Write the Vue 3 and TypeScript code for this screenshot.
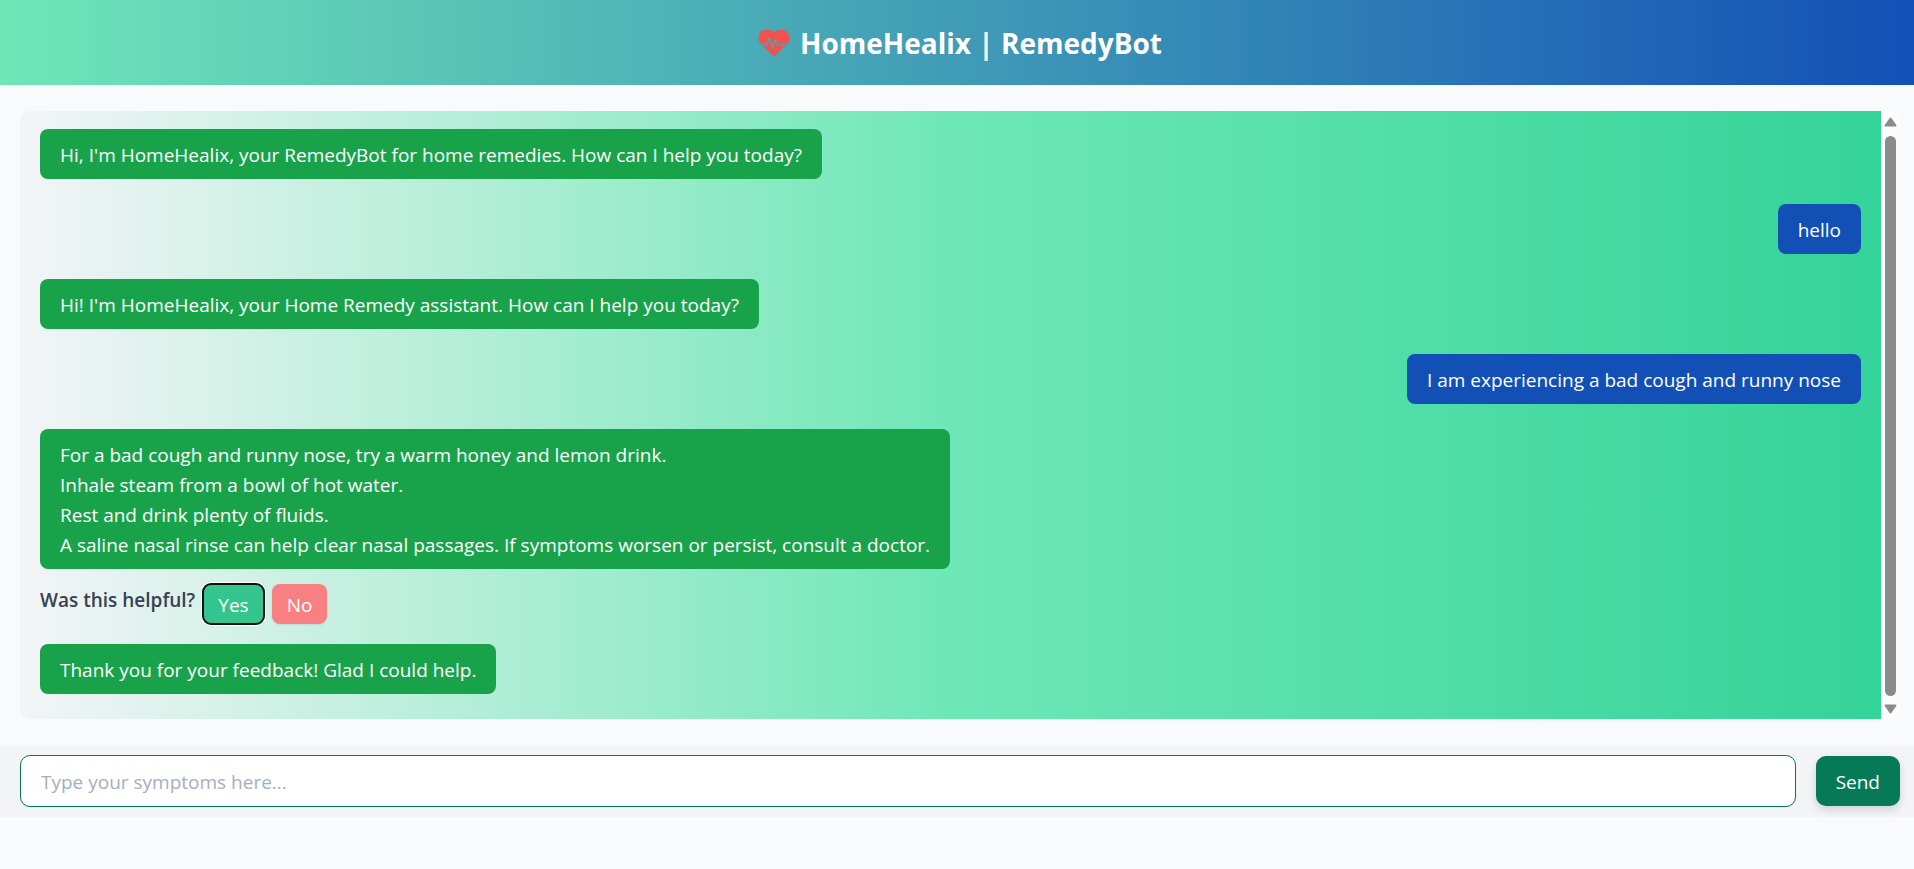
<script setup lang="ts">
import { ref } from 'vue'

interface Message {
  from: 'bot' | 'user'
  lines: string[]
  feedback?: boolean
}

const messages = ref<Message[]>([
  { from: 'bot', lines: ["Hi, I'm HomeHealix, your RemedyBot for home remedies. How can I help you today?"] },
  { from: 'user', lines: ['hello'] },
  { from: 'bot', lines: ["Hi! I'm HomeHealix, your Home Remedy assistant. How can I help you today?"] },
  { from: 'user', lines: ['I am experiencing a bad cough and runny nose'] },
  {
    from: 'bot',
    lines: [
      'For a bad cough and runny nose, try a warm honey and lemon drink.',
      'Inhale steam from a bowl of hot water.',
      'Rest and drink plenty of fluids.',
      'A saline nasal rinse can help clear nasal passages. If symptoms worsen or persist, consult a doctor.',
    ],
    feedback: true,
  },
  { from: 'bot', lines: ['Thank you for your feedback! Glad I could help.'] },
])

const draft = ref('')
const answer = ref<'yes' | 'no'>('yes')

function send() {
  const text = draft.value.trim()
  if (!text) return
  messages.value.push({ from: 'user', lines: [text] })
  draft.value = ''
}
</script>

<template>
  <div class="page">
    <header class="header">
      <svg class="logo" viewBox="-6 0 38 28" aria-hidden="true">
        <path
          fill="#ef5350"
          d="M16 3.6C13.6 1 11.4.4 8.9.4 4 .4.5 4 .5 8.8c0 2.6 1 5 3 7L16 27.6 28.5 15.8c2-2 3-4.4 3-7C31.5 4 28 .4 23.1.4c-2.5 0-4.7.6-7.1 3.2z"
        />
        <path
          class="pulse"
          d="M3 15.8H8.3L11.2 9 14.4 19 17.3 11.4 19.5 15.8H29"
        />
      </svg>
      <h1 class="title">HomeHealix | RemedyBot</h1>
    </header>

    <main class="chat">
      <div class="log">
        <div v-for="(m, i) in messages" :key="i" class="entry" :class="m.from">
          <div class="bubble">
            <p v-for="line in m.lines" :key="line">{{ line }}</p>
          </div>
          <div v-if="m.feedback" class="feedback">
            <span class="question">Was this helpful?</span>
            <button type="button" class="choice yes" :class="{ active: answer === 'yes' }" @click="answer = 'yes'">Yes</button>
            <button type="button" class="choice no" :class="{ active: answer === 'no' }" @click="answer = 'no'">No</button>
          </div>
        </div>
      </div>
      <div class="scrollbar" aria-hidden="true">
        <svg class="arrow" viewBox="0 0 13 10"><path d="M6.5 1.5 11.5 8.5H1.5z" /></svg>
        <div class="thumb"></div>
        <svg class="arrow" viewBox="0 0 13 10"><path d="M6.5 8.5 11.5 1.5H1.5z" /></svg>
      </div>
    </main>

    <form class="composer" @submit.prevent="send">
      <input v-model="draft" class="field" type="text" aria-label="Symptoms" placeholder="Type your symptoms here..." />
      <button type="submit" class="send">Send</button>
    </form>
  </div>
</template>

<style>
body {
  margin: 0;
  background: #f9fafc;
}
</style>

<style scoped>
.page {
  min-height: 100vh;
  box-sizing: border-box;
  background: #f9fafc;
  color: #374151;
  font-family: 'Segoe UI', 'Open Sans', 'Noto Sans', sans-serif;
  font-size: 19px;
  line-height: 30px;
}

.header {
  display: flex;
  align-items: center;
  justify-content: center;
  gap: 10px;
  height: 85px;
  background: linear-gradient(to right, #6ee7b7, #1250b6);
}

.logo {
  width: 38px;
  height: 28px;
}

.pulse {
  fill: none;
  stroke: #4aa9b7;
  stroke-width: 1.3;
  stroke-linejoin: round;
}

.title {
  margin: 0;
  color: #fff;
  font-size: 28px;
  line-height: 40px;
  font-weight: 700;
}

.chat {
  display: flex;
  margin: 26px 14px 26px 20px;
  min-height: 70vh;
  border-radius: 10px;
  overflow: hidden;
}

.log {
  flex: 1;
  display: flex;
  flex-direction: column;
  gap: 25px;
  padding: 18px 20px 25px;
  background: linear-gradient(to right, #f3f4f6, #6ee7b7, #34d399);
}

.entry {
  display: flex;
  flex-direction: column;
  align-items: flex-start;
}

.entry.user {
  align-items: flex-end;
}

.bubble {
  padding: 11px 20px 9px;
  border-radius: 8px;
  background: #18a34b;
  color: #fff;
}

.user .bubble {
  background: #1250b6;
}

.bubble p {
  margin: 0;
}

.feedback {
  display: flex;
  gap: 8px;
  margin-top: 15px;
  margin-bottom: -5px;
}

.question {
  line-height: 32px;
  font-weight: 600;
}

.choice {
  height: 40px;
  padding: 2px 15px 0;
  border: 0;
  border-radius: 8px;
  color: #fff;
  font: inherit;
  box-shadow: 0 1px 2px rgba(0, 0, 0, 0.08);
}

.yes {
  background: #34c48e;
}

.no {
  background: #f98082;
}

.choice.active {
  outline: 2px solid #101010;
  outline-offset: -1px;
  box-shadow: 0 0 0 2px #fff;
}

.scrollbar {
  display: flex;
  flex-direction: column;
  align-items: center;
  justify-content: space-between;
  width: 19px;
  padding: 6px 0 5px;
  box-sizing: border-box;
  background: #fcfcfc;
}

.arrow {
  width: 13px;
  height: 10px;
  fill: #8b8b8b;
  stroke: #8b8b8b;
  stroke-width: 2;
  stroke-linejoin: round;
}

.thumb {
  flex: 1;
  width: 11px;
  margin: 9px 0 8px;
  border-radius: 6px;
  background: #8b8b8b;
}

.composer {
  display: flex;
  align-items: center;
  gap: 20px;
  padding: 10px 14px 10px 20px;
  background: #f3f4f6;
}

.field {
  flex: 1;
  min-width: 0;
  height: 52px;
  box-sizing: border-box;
  padding: 2px 20px 0;
  border: 1px solid #047857;
  border-radius: 10px;
  background: #fff;
  color: #374151;
  font: inherit;
  box-shadow: 0 1px 2px rgba(0, 0, 0, 0.05);
}

.field::placeholder {
  color: #a3afc0;
  opacity: 1;
}

.send {
  height: 50px;
  padding: 2px 20px 0;
  border: 0;
  border-radius: 10px;
  background: #067a55;
  color: #fff;
  font: inherit;
  box-shadow: 0 4px 8px rgba(0, 0, 0, 0.14);
}
</style>
